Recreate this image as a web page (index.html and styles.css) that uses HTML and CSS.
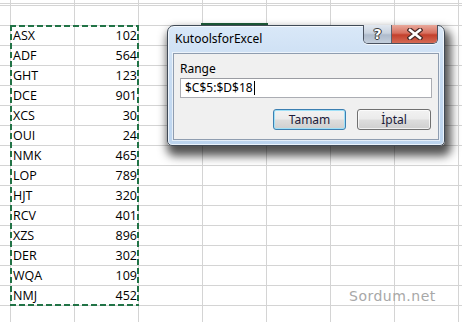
FILE: index.html
```html
<!DOCTYPE html>
<html>
<head>
<meta charset="utf-8">
<link rel="stylesheet" href="styles.css">
</head>
<body>
<div class="sheet">
  <div class="active-cell"></div>
  <div class="sel">
    <div class="row"><span>ASX</span><span>102</span></div>
    <div class="row"><span>ADF</span><span>564</span></div>
    <div class="row"><span>GHT</span><span>123</span></div>
    <div class="row"><span>DCE</span><span>901</span></div>
    <div class="row"><span>XCS</span><span>30</span></div>
    <div class="row"><span>OUI</span><span>24</span></div>
    <div class="row"><span>NMK</span><span>465</span></div>
    <div class="row"><span>LOP</span><span>789</span></div>
    <div class="row"><span>HJT</span><span>320</span></div>
    <div class="row"><span>RCV</span><span>401</span></div>
    <div class="row"><span>XZS</span><span>896</span></div>
    <div class="row"><span>DER</span><span>302</span></div>
    <div class="row"><span>WQA</span><span>109</span></div>
    <div class="row"><span>NMJ</span><span>452</span></div>
  </div>

  <div class="dialog">
    <div class="titlebar">
      <span class="title">KutoolsforExcel</span>
      <div class="caption-btns">
        <div class="cbtn help">?</div>
        <div class="cbtn close">
          <svg width="16" height="12" viewBox="0 0 16 12"><path d="M3 2 L13 10 M13 2 L3 10" stroke="#4a2b28" stroke-width="5" stroke-linecap="square"/><path d="M3 2 L13 10 M13 2 L3 10" stroke="#fff" stroke-width="2.6" stroke-linecap="square"/></svg>
        </div>
      </div>
    </div>
    <div class="client">
      <div class="label">Range</div>
      <div class="input"><span>$C$5:$D$18</span><i class="caret"></i></div>
      <div class="buttons">
        <div class="btn focus">Tamam</div>
        <div class="btn">İptal</div>
      </div>
    </div>
  </div>

  <div class="watermark">Sordum.net</div>
</div>
</body>
</html>
```

FILE: styles.css
```css
html, body {
  margin: 0;
  padding: 0;
  background: #fff;
}

.sheet {
  position: relative;
  width: 462px;
  height: 322px;
  overflow: hidden;
  box-sizing: border-box;
  padding: 25px 0 0 10px;
  background-color: #fff;
  background-image:
    repeating-linear-gradient(to right, #d4d4d4 0 1px, transparent 1px 64px),
    repeating-linear-gradient(to bottom, #d4d4d4 0 1px, transparent 1px 20px);
  background-position: 10px 0, 0 5px;
}

.sel {
  position: relative;
  width: 129px;
  height: 281px;
  display: grid;
  grid-auto-rows: 20px;
  font-family: "Open Sans", "Liberation Sans", sans-serif;
  font-size: 12.5px;
  color: #000;
}

.sel::after {
  content: "";
  position: absolute;
  inset: 0;
  background:
    repeating-linear-gradient(to right, #217346 0 6px, transparent 6px 9px) top left / 100% 2px no-repeat,
    repeating-linear-gradient(to right, #217346 0 6px, transparent 6px 9px) bottom left / 100% 2px no-repeat,
    repeating-linear-gradient(to bottom, #217346 0 6px, transparent 6px 9px) top left / 2px 100% no-repeat,
    repeating-linear-gradient(to bottom, #217346 0 6px, transparent 6px 9px) top right / 2px 100% no-repeat;
}

.row {
  display: flex;
  justify-content: space-between;
  align-items: center;
  line-height: 20px;
  padding: 1px 2px 0 3px;
}

.active-cell {
  position: absolute;
  left: 201px;
  top: 23px;
  width: 63px;
  height: 30px;
  border: 2px solid #1e5e3a;
}

.dialog {
  position: absolute;
  left: 167px;
  top: 25px;
  width: 278px;
  height: 121px;
  box-sizing: border-box;
  border: 1px solid #404a56;
  border-radius: 7px 7px 5px 5px;
  background: linear-gradient(180deg, #d9e8f8 0%, #c8dcf2 40%, #bcd4ee 100%);
  box-shadow: inset 0 0 0 1px rgba(255,255,255,0.7), 3px 7px 10px 3px rgba(0,0,0,0.68);
  display: flex;
  flex-direction: column;
  padding: 0 5px 5px 5px;
  font-family: "Noto Sans", "Open Sans", sans-serif;
}

.titlebar {
  position: relative;
  height: 27px;
  flex: none;
}

.title {
  display: block;
  padding: 5px 0 0 2px;
  font-size: 12px;
  line-height: 16px;
  color: #000;
}

.caption-btns {
  position: absolute;
  top: -1px;
  right: 1px;
  display: flex;
  border: 1px solid #4a5260;
  border-top: none;
  border-radius: 0 0 5px 5px;
  overflow: hidden;
  box-shadow: 0 1px 0 rgba(255,255,255,0.7);
}

.cbtn {
  height: 18px;
  display: flex;
  align-items: center;
  justify-content: center;
}

.help {
  width: 27px;
  background: linear-gradient(180deg, #e2e8f0 0%, #c9d3df 45%, #aebbcc 55%, #c4cfdc 100%);
  border-right: 1px solid #5a6270;
  font-family: "DejaVu Sans", sans-serif;
  font-weight: bold;
  font-size: 14px;
  color: #fff;
  text-shadow: 0 0 1px #333, 0 0 1px #333, 1px 0 0 #444, -1px 0 0 #444, 0 1px 0 #444, 0 -1px 0 #444;
}

.close {
  width: 45px;
  background: linear-gradient(180deg, #e8a99c 0%, #d7705f 45%, #c3402c 55%, #d46a55 100%);
}

.client {
  flex: 1;
  background: #f0f0f0;
  border: 1px solid #8f9db0;
  box-shadow: 0 0 0 1px rgba(255,255,255,0.6);
  padding: 7px 6px 0 6px;
  display: flex;
  flex-direction: column;
  font-size: 12px;
  color: #000;
}

.label {
  line-height: 16px;
  height: 16px;
}

.input {
  margin-top: 1px;
  height: 20px;
  box-sizing: border-box;
  border: 1px solid #abadb3;
  border-top-color: #9a9ca2;
  background: #fff;
  padding: 0 4px;
  display: flex;
  align-items: center;
  line-height: 18px;
}

.caret {
  display: inline-block;
  width: 1px;
  height: 14px;
  background: #000;
  margin-left: 1px;
}

.buttons {
  margin-top: 11px;
  display: flex;
  justify-content: flex-end;
  gap: 11px;
  padding-right: 1px;
}

.btn {
  width: 74px;
  height: 21px;
  box-sizing: border-box;
  border: 1px solid #707070;
  border-radius: 3px;
  background: linear-gradient(180deg, #f2f2f2 0%, #ebebeb 48%, #dddddd 52%, #cfcfcf 100%);
  box-shadow: inset 0 0 0 1px rgba(255,255,255,0.7);
  display: flex;
  align-items: center;
  justify-content: center;
  font-size: 12px;
  color: #1b1b3a;
}

.btn.focus {
  width: 73px;
  border-color: #3c7fb1;
  box-shadow: inset 0 0 0 1px #9fe0f7;
}

.watermark {
  position: absolute;
  left: 349px;
  top: 287px;
  font-family: "DejaVu Sans", sans-serif;
  font-size: 14px;
  line-height: 18px;
  letter-spacing: 0.5px;
  color: #a8a8a8;
}
```
